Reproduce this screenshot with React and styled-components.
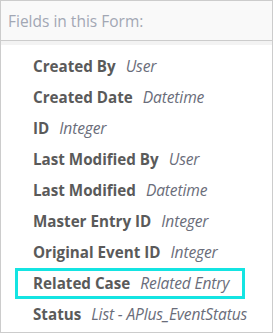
import React from "react";
import styled, { createGlobalStyle } from "styled-components";

const Global = createGlobalStyle`
  html, body { margin: 0; padding: 0; background: #ffffff; }
  body { font-family: "Open Sans", "Liberation Sans", sans-serif; }
`;

const Panel = styled.div`
  width: 273px;
  height: 333px;
  box-sizing: border-box;
  border: 1px solid #cccccc;
  background: #ffffff;
  display: flex;
  flex-direction: column;
  overflow: hidden;
`;

const Header = styled.div`
  height: 40px;
  box-sizing: border-box;
  border-bottom: 1px solid #cccccc;
  background: #f9f9f9;
  display: flex;
  align-items: center;
  padding-left: 7px;
  font-size: 15.5px;
  color: #a2a7b4;
`;

const Strip = styled.div`
  height: 4px;
  background: #f3f3f3;
`;

const List = styled.ul`
  list-style: none;
  margin: 0;
  padding: 6px 0 0 14px;
  display: flex;
  flex-direction: column;
`;

const Row = styled.li`
  width: 230px;
  height: 31px;
  box-sizing: border-box;
  border: 3px solid ${(p) => (p.$active ? "#14e4e2" : "transparent")};
  padding-left: 15px;
  padding-bottom: 1px;
  display: flex;
  align-items: center;
  gap: 10px;
  white-space: nowrap;
`;

const Label = styled.span`
  font-weight: 700;
  font-size: 15.2px;
  color: #5a5a5a;
`;

const Type = styled.span`
  font-style: italic;
  font-size: 15.6px;
  color: #6a6d7a;
  letter-spacing: -0.15px;
`;

const fields = [
  ["Created By", "User"],
  ["Created Date", "Datetime"],
  ["ID", "Integer"],
  ["Last Modified By", "User"],
  ["Last Modified", "Datetime"],
  ["Master Entry ID", "Integer"],
  ["Original Event ID", "Integer"],
  ["Related Case", "Related Entry", true],
  ["Status", "List - APlus_EventStatus"],
];

export default function App() {
  return (
    <>
      <Global />
      <Panel>
        <Header>Fields in this Form:</Header>
        <Strip />
        <List>
          {fields.map(([label, type, active]) => (
            <Row key={label} $active={active}>
              <Label>{label}</Label>
              <Type>{type}</Type>
            </Row>
          ))}
        </List>
      </Panel>
    </>
  );
}
